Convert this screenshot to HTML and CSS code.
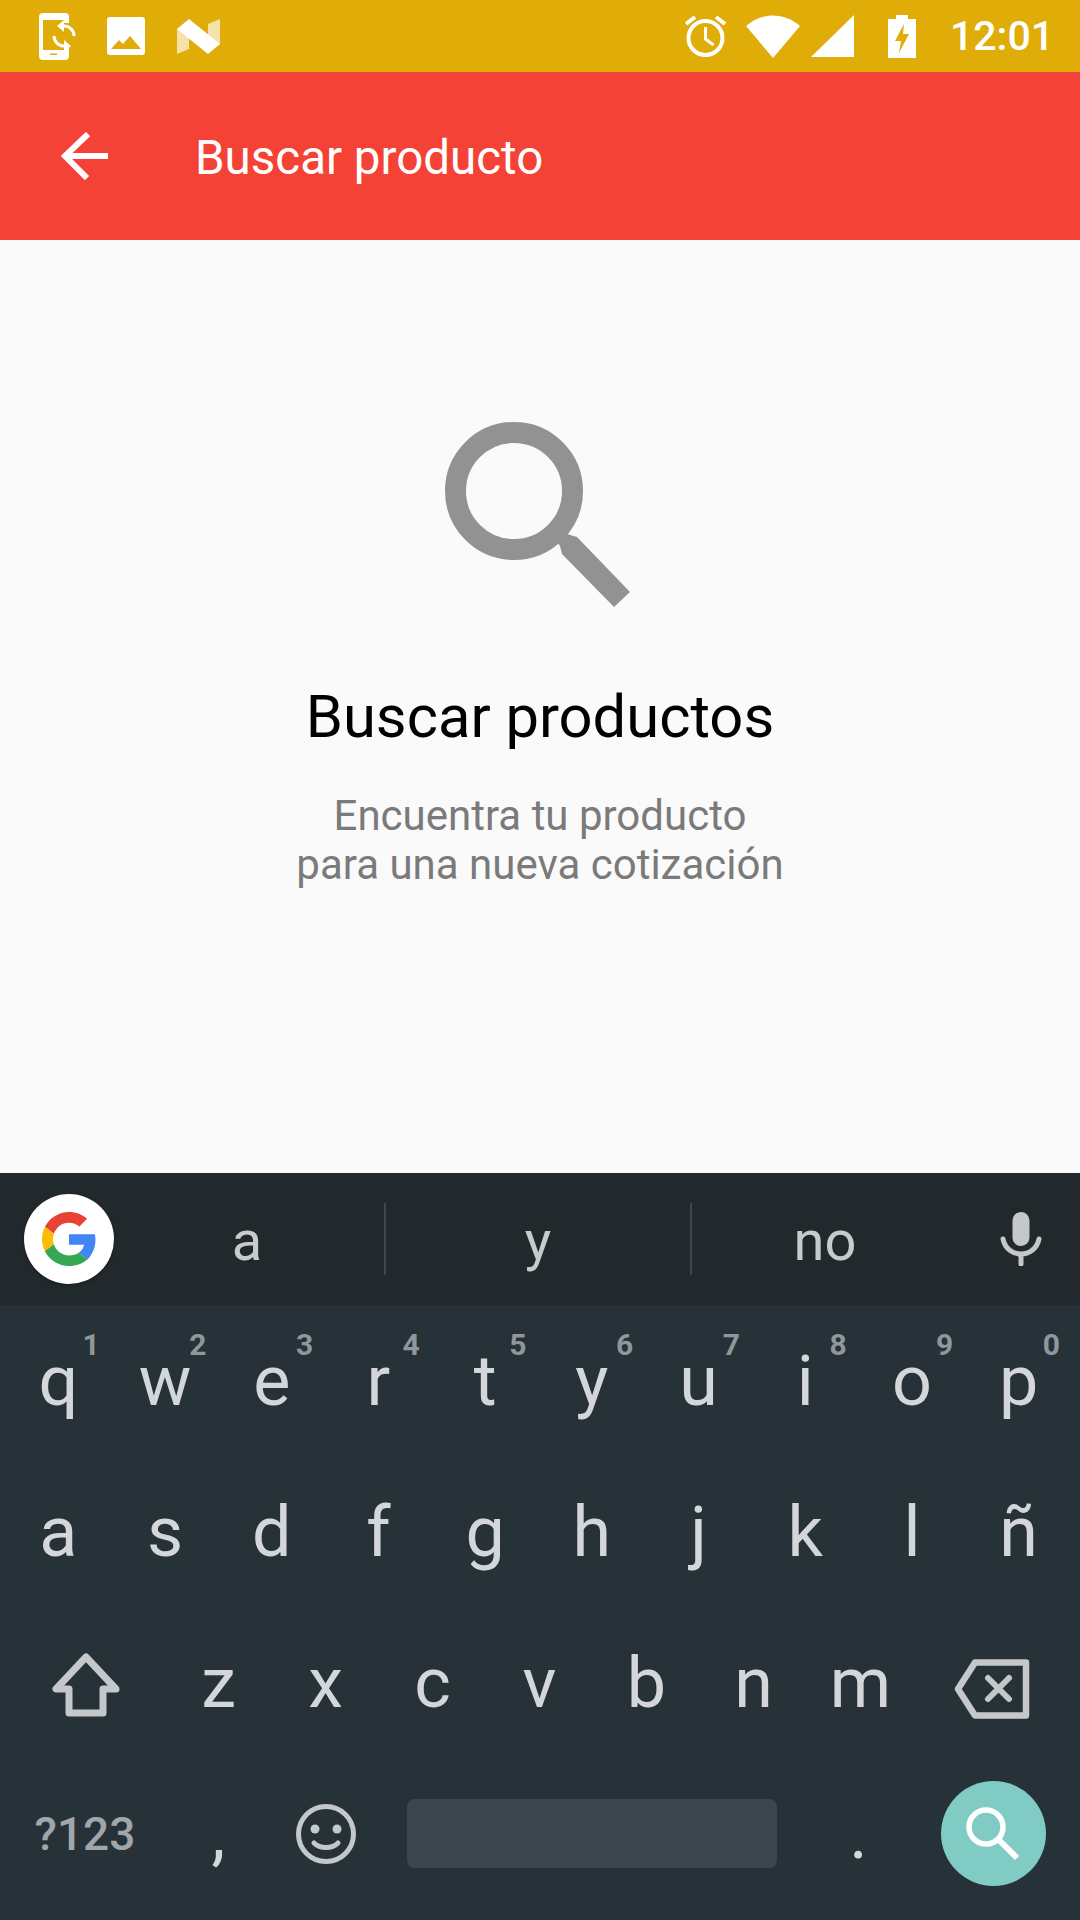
FILE: index.html
```html
<!DOCTYPE html>
<html lang="es">
<head>
<meta charset="utf-8">
<title>Buscar producto</title>
<link rel="stylesheet" href="styles.css">
</head>
<body>
<div class="screen">
  <header class="status">
    <div class="status-left">
      <svg class="ic-phone" viewBox="0 0 38 47"><path fill="#fff" fill-rule="evenodd" d="M4 0h22a4 4 0 0 1 4 4v6h-5V7H4v30h21v-3h5v9a4 4 0 0 1-4 4H4a4 4 0 0 1-4-4V4a4 4 0 0 1 4-4zM11 40.500v1.500h7v-1.500z"/><g fill="none" stroke="#fff" stroke-width="3"><path d="M35 23A10 10 0 0 0 25 13"/><path d="M15 23A10 10 0 0 0 25 33"/></g><path fill="#fff" d="M25 7l-7 6 7 6zM25 27l7 6-7 6z"/></svg>
      <svg class="ic-img" viewBox="0 0 38 38"><path fill="#fff" fill-rule="evenodd" d="M3 0h32a3 3 0 0 1 3 3v32a3 3 0 0 1-3 3H3a3 3 0 0 1-3-3V3a3 3 0 0 1 3-3zM4 32h30L23 19l-7 8-4-4z"/></svg>
      <svg class="ic-n" viewBox="0 0 43 35"><path fill="#fff" opacity=".65" d="M0 10l12-2v22L0 35zM31 5l12-5v25l-12 5z"/><path fill="#fff" d="M0 10L12 0l31 25-12 10z"/></svg>
    </div>
    <div class="status-right">
      <svg class="ic-alarm" viewBox="0 0 41 42"><g fill="none" stroke="#fff"><circle cx="20.500" cy="23" r="17" stroke-width="4"/><path d="M20.500 12v12l8 6" stroke-width="3"/><path d="M1 9l9-7M40 9l-9-7" stroke-width="4"/></g></svg>
      <svg class="ic-wifi" viewBox="0 0 54 43"><path fill="#fff" d="M0 11C16-3 38-3 54 11L27 43z"/></svg>
      <svg class="ic-signal" viewBox="0 0 43 42"><path fill="#fff" d="M43 0v42H0z"/></svg>
      <svg class="ic-batt" viewBox="0 0 28 43"><path fill="#fff" fill-rule="evenodd" d="M8 0h12v4h8v39H0V4h8zM16 9L7 26h6l-2 12 10-19h-6z"/></svg>
      <span class="time">12:01</span>
    </div>
  </header>

  <div class="appbar">
    <svg class="ic-back" viewBox="0 0 48 48"><path fill="none" stroke="#fff" stroke-width="6" d="M48 24H6M28 2L5 24l22 22"/></svg>
    <h1 class="appbar-title">Buscar producto</h1>
  </div>

  <main class="empty">
    <svg class="ic-search-big" viewBox="0 0 185 185"><circle cx="69" cy="69" r="58.500" fill="none" stroke="#929292" stroke-width="21"/><path fill="#929292" d="M111 118l11-6 10 3 53 55-16 15-52-53-2-8z"/></svg>
    <h2 class="empty-title">Buscar productos</h2>
    <p class="empty-text">Encuentra tu producto<br>para una nueva cotización</p>
  </main>

  <section class="keyboard">
    <div class="strip">
      <div class="strip-logo">
        <div class="g-badge">
          <svg class="ic-g" viewBox="0 0 48 48"><path fill="#ea4335" d="M24 9.500c3.500 0 6.700 1.300 9.200 3.400l6.900-6.900C35.900 2.300 30.300 0 24 0 14.600 0 6.500 5.400 2.600 13.200l8 6.200C12.400 13.600 17.700 9.500 24 9.500z"/><path fill="#4285f4" d="M47.500 24.500c0-1.600-.2-3.200-.5-4.700H24v9.300h13.400c-.6 3-2.300 5.500-4.800 7.200l7.700 6c4.500-4.200 7.200-10.400 7.200-17.800z"/><path fill="#fbbc05" d="M10.500 28.600C10 27.200 9.700 25.600 9.700 24s.3-3.200.9-4.600l-8-6.200C.9 16.500 0 20.100 0 24s.9 7.500 2.600 10.800z"/><path fill="#34a853" d="M24 48c6.500 0 11.900-2.100 16.300-5.800l-7.700-6c-2.200 1.500-5.100 2.400-8.600 2.400-6.300 0-11.600-4.100-13.500-9.900l-8 6.200C6.500 42.600 14.600 48 24 48z"/></svg>
        </div>
      </div>
      <div class="sugg sugg-a">a</div>
      <div class="sugg sugg-b">y</div>
      <div class="sugg">no</div>
      <div class="strip-mic">
        <svg class="ic-mic" viewBox="0 0 42 54"><rect x="12.500" y="0" width="17" height="34" rx="8.500" fill="#c5c8ca"/><path fill="none" stroke="#c5c8ca" stroke-width="5" stroke-linecap="round" d="M3 27c2 10 10 15 18 15s16-5 18-15M21 42v10"/></svg>
      </div>
    </div>
    <div class="keys">
      <div class="row row-ten">
        <div class="key">q<span class="hint">1</span></div>
        <div class="key">w<span class="hint">2</span></div>
        <div class="key">e<span class="hint">3</span></div>
        <div class="key">r<span class="hint">4</span></div>
        <div class="key">t<span class="hint">5</span></div>
        <div class="key">y<span class="hint">6</span></div>
        <div class="key">u<span class="hint">7</span></div>
        <div class="key">i<span class="hint">8</span></div>
        <div class="key">o<span class="hint">9</span></div>
        <div class="key">p<span class="hint">0</span></div>
      </div>
      <div class="row row-ten">
        <div class="key">a</div><div class="key">s</div><div class="key">d</div><div class="key">f</div><div class="key">g</div>
        <div class="key">h</div><div class="key">j</div><div class="key">k</div><div class="key">l</div><div class="key">ñ</div>
      </div>
      <div class="row row-third">
        <div class="key">
          <svg class="ic-shift" viewBox="0 0 68 64"><path fill="none" stroke="#c5c8ca" stroke-width="7" stroke-linejoin="round" d="M34 4L4 36h13v24h34V36h13z"/></svg>
        </div>
        <div class="key">z</div><div class="key">x</div><div class="key">c</div><div class="key">v</div><div class="key">b</div><div class="key">n</div><div class="key">m</div>
        <div class="key">
          <svg class="ic-del" viewBox="0 0 76 60"><path fill="none" stroke="#c5c8ca" stroke-width="6.500" stroke-linejoin="round" d="M21 3.500h51v53H21L4 30z"/><path fill="none" stroke="#c5c8ca" stroke-width="6" stroke-linecap="round" d="M34 19l21 21M55 19L34 40"/></svg>
        </div>
      </div>
      <div class="row row-fourth">
        <div class="key key-sym">?123</div>
        <div class="key">,</div>
        <div class="key">
          <svg class="ic-smile" viewBox="0 0 60 60"><circle cx="30" cy="30" r="27.500" fill="none" stroke="#c5c8ca" stroke-width="5"/><circle cx="19" cy="25" r="4.500" fill="#c5c8ca"/><circle cx="41" cy="25" r="4.500" fill="#c5c8ca"/><path fill="none" stroke="#c5c8ca" stroke-width="5" stroke-linecap="round" d="M18 39c6 6 18 6 24 0"/></svg>
        </div>
        <div class="key"><div class="spacebar"></div></div>
        <div class="key">.</div>
        <div class="key">
          <div class="action"><svg class="ic-search" viewBox="0 0 54 54"><circle cx="20" cy="20" r="17" fill="none" stroke="#fff" stroke-width="5.500"/><path fill="none" stroke="#fff" stroke-width="6" d="M31 31l20 20"/></svg></div>
        </div>
      </div>
    </div>
  </section>
</div>
</body>
</html>
```
FILE: styles.css
```css
* { box-sizing: border-box; }
html, body { margin: 0; padding: 0; }
body { font-family: Roboto, "Noto Sans", sans-serif; }
.screen { width: 1080px; height: 1920px; display: flex; flex-direction: column; background: #fafafa; overflow: hidden; }
svg { display: block; flex: none; }

.status { height: 72px; background: #e0ac08; display: flex; justify-content: space-between; align-items: center; padding: 0 26px 0 39px; color: #fff; }
.status-left { display: flex; align-items: center; }
.ic-phone { width: 38px; height: 47px; }
.ic-img { width: 38px; height: 38px; margin-left: 30px; }
.ic-n { width: 43px; height: 35px; margin-left: 32px; }
.status-right { display: flex; align-items: center; }
.ic-alarm { width: 41px; height: 42px; }
.ic-wifi { width: 54px; height: 43px; margin-left: 20px; }
.ic-signal { width: 43px; height: 42px; margin-left: 11px; }
.ic-batt { width: 28px; height: 43px; margin-left: 34px; }
.time { font-size: 41px; font-weight: 500; line-height: 48px; margin-left: 34px; }

.appbar { height: 168px; background: #f44336; display: flex; align-items: center; padding-left: 60px; color: #fff; }
.ic-back { width: 48px; height: 48px; }
.appbar-title { margin: 4px 0 0 87px; font-size: 47.500px; font-weight: 400; line-height: 56px; }

.empty { flex: 1; display: flex; flex-direction: column; align-items: center; padding-top: 182px; }
.ic-search-big { width: 185px; height: 185px; margin-right: 5px; }
.empty-title { margin: 77px 0 0; font-size: 59.700px; font-weight: 400; line-height: 66px; color: #000; }
.empty-text { margin: 41px 0 0; font-size: 42px; line-height: 49px; color: #7a7a7a; text-align: center; }

.keyboard { height: 747px; background: #263238; display: flex; flex-direction: column; }
.strip { height: 132px; background: #22292d; display: grid; grid-template-columns: 110px 276px 306px 266px 1fr; align-items: center; }
.strip-logo { display: flex; padding-left: 24px; }
.g-badge { flex: none; width: 90px; height: 90px; border-radius: 50%; background: #fff; display: flex; align-items: center; justify-content: center; box-shadow: 0 1px 3px rgba(0,0,0,.4); }
.ic-g { width: 54px; height: 54px; }
.sugg { height: 72px; padding-top: 4px; display: flex; align-items: center; justify-content: center; font-size: 56px; color: #c8cbcd; }
.sugg-a, .sugg-b { border-right: 2px solid #3d474c; }
.strip-mic { display: flex; justify-content: center; padding-left: 3px; }
.ic-mic { width: 42px; height: 54px; }

.keys { display: grid; grid-template-rows: repeat(4, 151px); padding: 0 6px 0 5px; }
.row { display: grid; }
.row-ten { grid-template-columns: repeat(10, 1fr); padding-right: 2px; }
.row-third { grid-template-columns: 160px repeat(7, 107px) 1fr; }
.row-fourth { grid-template-columns: 160px 107px 107px 426px 107px 1fr; }
.key { position: relative; display: flex; align-items: center; justify-content: center; font-size: 70px; font-weight: 400; color: #d4d7da; line-height: 1; }
.hint { position: absolute; top: 24px; right: 12px; font-size: 30px; font-weight: 700; color: #8f979c; line-height: 32px; }
.key-sym { font-size: 46px; font-weight: 500; color: #a0a6aa; }
.spacebar { width: 370px; height: 69px; background: #3c474d; border-radius: 8px; flex: none; }
.ic-shift { width: 68px; height: 64px; margin: 4px 0 0 2px; }
.ic-del { width: 76px; height: 60px; margin: 12px 4px 0 0; }
.ic-smile { width: 60px; height: 60px; }
.action { width: 105px; height: 105px; border-radius: 50%; background: #80cbc4; display: flex; align-items: center; justify-content: center; }
.ic-search { width: 54px; height: 54px; }
```
